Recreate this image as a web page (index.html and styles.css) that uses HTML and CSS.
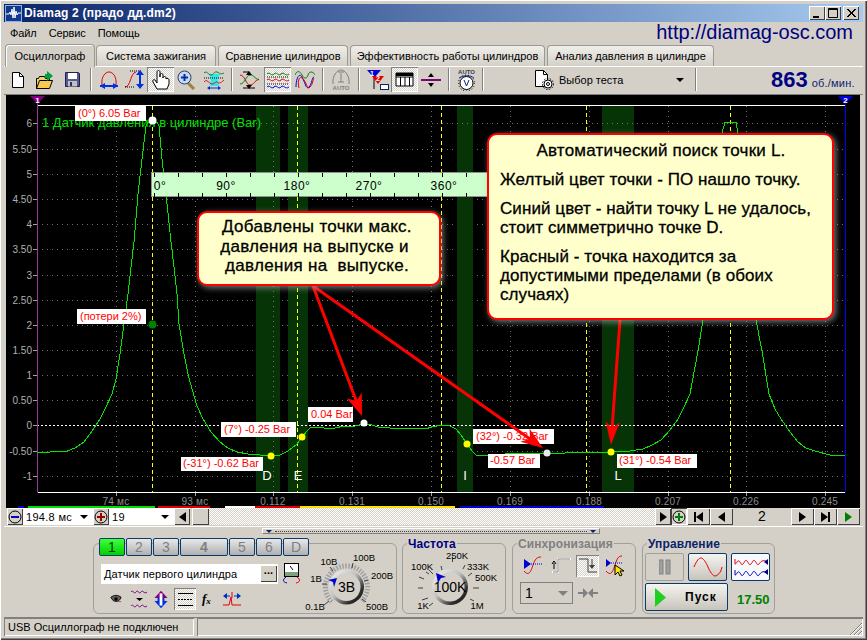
FILE: index.html
```html
<!DOCTYPE html>
<html lang="ru">
<head>
<meta charset="utf-8">
<title>Diamag 2</title>
<link rel="stylesheet" href="styles.css">
</head>
<body>
<svg class="defs" width="0" height="0"><defs>
<linearGradient id="kn" x1="0" y1="0" x2="1" y2="1"><stop offset="0" stop-color="#f8f8f8"/><stop offset=".45" stop-color="#c0c0c0"/><stop offset=".75" stop-color="#303030"/><stop offset="1" stop-color="#101010"/></linearGradient>
</defs></svg>
<div class="win">
  <header class="titlebar">
    <svg class="appicon" width="17" height="17" viewBox="0 0 17 17"><rect width="17" height="17" fill="#123a8c"/><rect x=".5" y=".5" width="16" height="16" fill="none" stroke="#8fb0e8"/><path d="M1 9h3l1-2 1 3 1-6 1 9 1-11 1 11 1-7 1 4 1-2h3" fill="none" stroke="#fff"/></svg>
    <span class="apptitle">Diamag 2 (прадо дд.dm2)</span>
    <div class="winbtns">
      <span class="wb"><svg width="14" height="12" viewBox="0 0 14 12"><rect x="3" y="9" width="6" height="2"/></svg></span>
      <span class="wb"><svg width="14" height="12" viewBox="0 0 14 12"><path d="M2.5 1.5h9v9h-9zM2 2.5h10" fill="none" stroke="#000"/></svg></span>
      <span class="wb wb-x"><svg width="14" height="12" viewBox="0 0 14 12"><path d="M3 2l8 8M4 2l8 8M11 2l-8 8M12 2l-8 8" stroke="#000"/></svg></span>
    </div>
  </header>
  <nav class="menubar">
    <span>Файл</span><span>Сервис</span><span>Помощь</span>
    <a class="url">http://diamag-osc.com</a>
  </nav>
  <div class="tabs">
    <div class="tab active">Осциллограф</div>
    <div class="tab">Система зажигания</div>
    <div class="tab">Сравнение цилиндров</div>
    <div class="tab">Эффективность работы цилиндров</div>
    <div class="tab">Анализ давления в цилиндре</div>
  </div>
  <div class="toolbar">
    <span class="tb w24"><svg width="14" height="16" viewBox="0 0 14 16"><path d="M1.500 .5h7l4 4v11h-11z" fill="#fff" stroke="#000"/><path d="M8.500 .5v4h4" fill="none" stroke="#000"/></svg></span>
    <span class="tb w29"><svg width="20" height="20" viewBox="0 0 20 20"><path d="M1.500 18.500v-10h2l1-2h5l1 2h4v2" fill="#f0d070" stroke="#000"/><path d="M1.500 18.500l3-8h13l-3 8z" fill="#f8c850" stroke="#000"/><path d="M12 1l6 5-6 5v-3h-2v-4h2z" fill="#00a040"/></svg></span>
    <span class="tb w26"><svg width="15" height="15" viewBox="0 0 15 15"><path d="M.5.500h13l1 1v13h-14z" fill="#555a90" stroke="#202050"/><rect x="3" y="1" width="9" height="6" fill="#fff"/><rect x="3" y="9" width="9" height="5.500" fill="#c0c0c0"/><rect x="5" y="10" width="2" height="4" fill="#303060"/></svg></span>
    <i class="sep"></i>
    <span class="tb w25"><svg width="20" height="18" viewBox="0 0 20 18"><path d="M3 14C2 6 6 1 10 1s8 5 7 13" fill="none" stroke="#e00000"/><path d="M1 15h18" stroke="#0030e0" stroke-width="2"/><path d="M1 15l5-3v6zM19 15l-5-3v6z" fill="#0030e0"/></svg></span>
    <span class="tb w26"><svg width="21" height="19" viewBox="0 0 21 19"><path d="M1 17c6 0 5-14 11-15" fill="none" stroke="#e00000"/><path d="M6 1h12M1 17h9" stroke="#000" stroke-dasharray="1 1"/><path d="M16 3v13" stroke="#0030e0" stroke-width="2"/><path d="M16 0l4 5h-8zM16 19l4-5h-8z" fill="#0030e0"/></svg></span>
    <span class="tb w27 pressed"><svg width="18" height="21" viewBox="0 0 18 21"><path d="M5 20l-4-7c-1-2 1-3 2-2l2 3V3c0-2 3-2 3 0v5V6c0-2 3-2 3 0v3c0-2 3-2 3 0v1c0-1 3-1 3 1v4l-2 5z" fill="#fff" stroke="#000"/></svg></span>
    <span class="tb w25"><svg width="19" height="20" viewBox="0 0 19 20"><path d="M11 13l6 6" stroke="#a08040" stroke-width="3"/><circle cx="7.500" cy="7.500" r="6.500" fill="#c8d8f8" stroke="#304060"/><path d="M4 7.500h7M7.500 4v7" stroke="#0030a0" stroke-width="2"/></svg></span>
    <span class="tb w29"><svg width="20" height="20" viewBox="0 0 20 20"><path d="M5 4h11l-2 5 1 7H6l1-7z" fill="#30e8e8"/><path d="M0 3c3-3 4 2 7 2s3-4 6-3 3 3 7 1" fill="none" stroke="#0a8040"/><path d="M0 8h20" stroke="#000" stroke-dasharray="1 1"/><path d="M0 12c3-4 5 2 8 2s4-3 5-2 3 2 7-2" fill="none" stroke="#d02020"/><path d="M4 18h12" stroke="#0030e0"/><path d="M3 18l3-2v4zM17 18l-3-2v4z" fill="#0030e0"/></svg></span>
    <i class="sep sep-s"></i>
    <span class="tb w25"><svg width="19" height="20" viewBox="0 0 19 20"><path d="M0 5c5 0 6 10 10 10s4-4 9-6" fill="none" stroke="#e00000"/><path d="M0 14c5 0 6-9 10-9s4 3 9 5" fill="none" stroke="#008000"/><path d="M3 2h6" stroke="#000"/><path d="M6 1l3 4h-6zM6 19l3-4h-6z" transform="translate(3 0)"/><path d="M3 18h12" stroke="#000"/></svg></span>
    <span class="tb w27 pressed waves"><svg width="22" height="19" viewBox="0 0 22 19"><path d="M0 4c3-3 4 3 7 0s4 3 7 0 4 3 8 0" fill="none" stroke="#008000"/><path d="M0 7h22M0 14h22" stroke="#000" stroke-dasharray="1 1"/><path d="M0 10c3-3 4 3 7 0s4 3 7 0 4 3 8 0" fill="none" stroke="#e00000"/><path d="M0 17c3-3 4 3 7 0s4 3 7 0 4 3 8 0" fill="none" stroke="#0000e0"/></svg></span>
    <span class="tb w28"><svg width="20" height="19" viewBox="0 0 20 19"><path d="M0 5c2-5 5-4 7 0s5 4 6 0 5-4 7 0" fill="none" stroke="#008000"/><path d="M1 17c0-8 3-15 6-10s4 13 7 10 3-10 5-10" fill="none" stroke="#0000e0"/><path d="M4 18c-2-8 1-14 5-8s3 10 6 7 3-8 4-9" fill="none" stroke="#e00000"/></svg></span>
    <i class="sep sep-s"></i>
    <span class="tb w26"><svg width="20" height="22" viewBox="0 0 20 22"><path d="M2 15C1 7 6 1 10 1s9 6 8 14" fill="#d4d0c8" stroke="#808080"/><path d="M10 4v9" stroke="#808080"/><path d="M7 3h6M7 13h6" stroke="#808080"/><text class="auto" x="10" y="21">AUTO</text></svg></span>
    <i class="sep sep-m"></i>
    <span class="tb w27"><svg width="24" height="22" viewBox="0 0 24 22"><path d="M1 1h14l-7 8z" fill="#0000d0"/><path d="M8 9v11" stroke="#000"/><path d="M6 7h12l-6 8z" fill="#e00000"/><text class="fl" x="6" y="7">1</text><text class="fl" x="12" y="12">2</text><rect x="14.500" y="15.500" width="8" height="5" fill="#fff" stroke="#0a246a"/></svg></span>
    <span class="tb w27 pressed"><svg width="19" height="15" viewBox="0 0 19 15"><path d="M1 1h17v13H1zM1 5h17M5.500 5v9M10 5v9M14.500 5v9" fill="#fff" stroke="#000"/><path d="M1 1h17v3H1z"/></svg></span>
    <span class="tb w26"><svg width="20" height="16" viewBox="0 0 20 16"><path d="M0 8h20" stroke="#800080" stroke-width="2"/><path d="M10 1l3 4H7zM10 15l3-4H7z"/></svg></span>
    <i class="sep sep-m"></i>
    <span class="tb w25"><svg width="19" height="22" viewBox="0 0 19 22"><text class="auto blk" x="9.500" y="5">AUTO</text><path d="M2 9c4-3 11-3 15 0" fill="none" stroke="#0030e0"/><circle cx="9.500" cy="14" r="6.500" fill="#fff" stroke="#000"/><circle cx="9.500" cy="14" r="8" fill="none" stroke="#000" stroke-dasharray="1 2"/><path d="M7 11l2.500 6 2.500-6" fill="none" stroke="#0a246a"/></svg></span>
    <i class="sep sep-s"></i>
    <div class="testsel">
      <svg width="21" height="22" viewBox="0 0 21 22"><path d="M1.500 1.500h8l4 4v12h-12z" fill="#fff" stroke="#000"/><path d="M9.500 1.500v4h4" fill="none" stroke="#000"/><circle cx="14" cy="15" r="4" fill="#fff" stroke="#000"/><circle cx="14" cy="15" r="5.500" fill="none" stroke="#000" stroke-dasharray="1.500 1.500"/><circle cx="14" cy="15" r="1.500" fill="none" stroke="#000"/></svg>
      <span class="testname">Выбор теста</span>
      <i class="caret"></i>
    </div>
    <i class="sep sep-n"></i>
    <div class="rpm"><b>863</b><span>об./мин.</span></div>
  </div>

  <main class="scope">
    <svg class="plot" width="854" height="413" viewBox="6 96 854 413">
      <g class="grid">
        <path d="M37 124.500H845M37 150.500H845M37 175.500H845M37 200.500H845M37 225.500H845M37 250.500H845M37 276.500H845M37 301.500H845M37 326.500H845M37 351.500H845M37 376.500H845M37 401.500H845M37 452.500H845M37 477.500H845"/>
        <path d="M116.500 107V493M195.500 107V493M273.500 107V493M352.500 107V493M431.500 107V493M510.500 107V493M589.500 107V493M668.500 107V493M746.500 107V493M825.500 107V493"/>
      </g>
      <g class="band">
        <rect x="256" y="107" width="24" height="386"/><rect x="288" y="107" width="20" height="386"/><rect x="457" y="107" width="16" height="386"/><rect x="602" y="107" width="32" height="386"/>
      </g>
      <path class="grid" d="M256 124.500H280M288 124.500H308M457 124.500H473M602 124.500H634M256 175.500H280M288 175.500H308M256 225.500H280M288 225.500H308M256 276.500H280M288 276.500H308M273.500 107V493"/>
      <path class="yline" d="M152.500 107V493M297.500 107V493M441.500 107V493M586.500 107V493M730.500 107V493"/>
      <path class="zero" d="M37 426.500H845"/>
      <path class="axis" d="M38 106.500H845M38 493.500H845"/>
      <path class="ch1" d="M37.500 100V493.500"/>
      <path class="ch2" d="M845.500 100V493.500"/>
      <path d="M30 97h15l-7.500 8z" fill="#800080"/><text class="mk" x="37.500" y="104">1</text>
      <path d="M838 97h15l-7.500 8z" fill="#0000e0"/><text class="mk" x="845.500" y="104">2</text>
      <path class="ticks" d="M33 124.500h4M33 150.500h4M33 175.500h4M33 200.500h4M33 225.500h4M33 250.500h4M33 276.500h4M33 301.500h4M33 326.500h4M33 351.500h4M33 376.500h4M33 401.500h4M33 426.500h4M33 452.500h4M33 477.500h4M116.500 494v3M195.500 494v3M273.500 494v3M352.500 494v3M431.500 494v3M510.500 494v3M589.500 494v3M668.500 494v3M746.500 494v3M825.500 494v3"/>
      <g class="ylab">
        <text x="32" y="128">6</text><text x="32" y="154">5.50</text><text x="32" y="179">5</text><text x="32" y="204">4.50</text><text x="32" y="229">4</text><text x="32" y="254">3.50</text><text x="32" y="280">3</text><text x="32" y="305">2.50</text><text x="32" y="330">2</text><text x="32" y="355">1.50</text><text x="32" y="380">1</text><text x="32" y="405">0.50</text><text x="32" y="430">0</text><text x="32" y="456">-0.50</text><text x="32" y="481">-1</text>
      </g>
      <g class="xlab">
        <text x="116" y="506">74 мс</text><text x="195" y="506">93 мс</text><text x="273" y="506">0.112</text><text x="352" y="506">0.131</text><text x="431" y="506">0.150</text><text x="510" y="506">0.169</text><text x="589" y="506">0.188</text><text x="668" y="506">0.207</text><text x="746" y="506">0.226</text><text x="825" y="506">0.245</text>
      </g>
      <text class="chname" x="42" y="128">1 Датчик давления в цилиндре (Bar)</text>
      <polyline class="curve" points="37,453 50,453 60,452 67,452 75,449 84,443 92,432 100,420 106,408 112,395 116,380 120,355 124,325 128,295 131,268 134,243 138,195 142,160 146,127 148,123 157,123 159,127 162,160 166,195 171,243 174,268 177,295 179,325 184,355 188,375 192,390 197,407 203,420 211,433 220,443 228,449 237,453 248,455 260,456 271,457 280,456 288,452 297,445 302,438 307,432 310,429 313,428 320,428 328,430 335,429 344,427 355,427 364,425 372,426 378,428 390,429 408,429 425,430 432,428 441,426 450,427 456,430 461,436 467,445 472,452 476,456 481,457 490,456 505,455 547,454 565,454 575,453 590,454 611,453 630,452 643,450 652,446 661,441 670,431 678,420 684,408 690,395 698,352 703,321 710,270 716,190 722,134 725,123 736,123 738,134 745,190 750,270 756,321 762,352 769,395 775,410 781,420 790,433 798,443 806,449 815,452 830,456 845,457"/>

      <g class="ruler">
        <rect class="rbar" x="151.500" y="173.500" width="336" height="24"/>
        <path class="rticks" d="M154.500 174v4M178.500 174v4M202.500 174v4M226.500 174v4M250.500 174v4M274.500 174v4M298.500 174v4M322.500 174v4M346.500 174v4M370.500 174v4M394.500 174v4M418.500 174v4M442.500 174v4M466.500 174v4M154.500 194v4M178.500 194v4M202.500 194v4M226.500 194v4M250.500 194v4M274.500 194v4M298.500 194v4M322.500 194v4M346.500 194v4M370.500 194v4M394.500 194v4M418.500 194v4M442.500 194v4M466.500 194v4"/>
        <text x="160" y="191">0°</text><text x="226" y="191">90°</text><text x="297" y="191">180°</text><text x="369" y="191">270°</text><text x="444" y="191">360°</text>
      </g>

      <g class="tags">
        <rect x="75" y="107" width="71" height="15"/><text x="78" y="118">(0°) 6.05 Bar</text>
        <rect x="77" y="310" width="69" height="15"/><text x="80" y="321">(потери 2%)</text>
        <rect x="221" y="423" width="75" height="15"/><text x="224" y="434">(7°) -0.25 Bar</text>
        <rect x="181" y="458" width="82" height="14"/><text x="183" y="468">(-31°) -0.62 Bar</text>
        <rect x="308" y="408" width="45" height="15"/><text x="311" y="419">0.04 Bar</text>
        <rect x="473" y="430" width="81" height="15"/><text x="476" y="441">(32°) -0.32 Bar</text>
        <rect x="488" y="455" width="52" height="14"/><text x="490" y="465">-0.57 Bar</text>
        <rect x="617" y="455" width="80" height="14"/><text x="619" y="465">(31°) -0.54 Bar</text>
      </g>
      <g class="lett"><text x="267" y="481">D</text><text x="298" y="481">E</text><text x="465" y="481">I</text><text x="618" y="481">L</text></g>
      <g class="pts">
        <circle cx="152.500" cy="121.500" r="4" fill="#fff"/><circle cx="152.500" cy="325.500" r="4" fill="#008000"/><circle cx="271" cy="457" r="3.500" fill="#ff0"/><circle cx="302" cy="438" r="3.500" fill="#ff0"/><circle cx="467" cy="445" r="3.500" fill="#ff0"/><circle cx="611" cy="453" r="3.500" fill="#ff0"/><circle cx="364" cy="424" r="3.500" fill="#fff"/><circle cx="547" cy="454" r="3.500" fill="#e8e8e8"/>
      </g>
      <g class="arrows">
        <path class="shaft" d="M313 287L357 404M313 287L530 440M620 321L612 430"/>
        <path d="M362 417L361.700 393.600 356.400 402 346.700 399.200zM543 449L529.600 429.800 529.900 439.800 520.400 442.800zM611 446L605.600 422.500 612.200 429 619.600 423.500z"/>
      </g>
      <g class="strip">
        <rect x="18" y="507" width="6" height="2" fill="#0000e0"/><rect x="28" y="507" width="127" height="2" fill="#00e000"/><rect x="158" y="507" width="52" height="2" fill="#e00000"/><rect x="225" y="507" width="30" height="2" fill="#fff"/><rect x="255" y="507" width="45" height="2" fill="#e00000"/><rect x="300" y="507" width="155" height="2" fill="#ffe000"/><rect x="460" y="507" width="144" height="2" fill="#0000e0"/>
      </g>
    </svg>
    <div class="note note-a">
      <p>Добавлены точки макс.</p>
      <p>давления на выпуске и&nbsp;</p>
      <p>давления на&nbsp; выпуске.</p>
    </div>
    <div class="note note-b">
      <h3>Автоматический поиск точки L.</h3>
      <p>Желтый цвет точки - ПО нашло точку.</p>
      <p>Синий цвет - найти точку L не удалось, стоит симметрично точке D.</p>
      <p>Красный - точка находится за допустимыми пределами (в обоих случаях)</p>
    </div>
  </main>

  <div class="navrow">
    <span class="nb w16"><svg width="14" height="14" viewBox="0 0 14 14"><circle cx="7" cy="7" r="6" fill="#d4d0c8" stroke="#000"/><path d="M3 7h8" stroke="#0000c0" stroke-width="2"/></svg></span>
    <div class="combo cb-a"><span>194.8 мс</span><i class="caret"></i></div>
    <span class="nb w16"><svg width="14" height="14" viewBox="0 0 14 14"><circle cx="7" cy="7" r="6" fill="#d4d0c8" stroke="#000"/><path d="M3 7h8M7 3v8" stroke="#a00000" stroke-width="2"/></svg></span>
    <div class="combo cb-b"><span>19</span><i class="caret"></i></div>
    <span class="nb w16"><i class="tri-l"></i></span>
    <span class="nb w17 thumb"></span>
    <div class="track"></div>
    <span class="nb w16"><i class="tri-r"></i></span>
    <span class="nb w16 sel"><svg width="14" height="14" viewBox="0 0 14 14"><circle cx="7" cy="7" r="6" fill="#d4d0c8" stroke="#000"/><path d="M3 7h8M7 3v8" stroke="#008000" stroke-width="2"/></svg></span>
    <span class="nb w23"><i class="bar"></i><i class="tri-l"></i></span>
    <span class="nb w23"><i class="tri-l"></i></span>
    <div class="pageno">2</div>
    <span class="nb w23"><i class="tri-r"></i></span>
    <span class="nb w23"><i class="tri-r"></i><i class="bar"></i></span>
    <span class="nb w23"><i class="tri-r grn"></i></span>
  </div>

  <section class="panel">
    <div class="splitter"><i class="sp-a"></i><i class="sp-dots"></i><i class="sp-a"></i></div>
    <div class="groups">
      <div class="grp g-ch">
        <div class="chrow">
          <span class="ch on">1</span><span class="ch">2</span><span class="ch">3</span><span class="ch ch4">4</span><span class="ch">5</span><span class="ch">6</span><span class="ch">D</span>
        </div>
        <div class="chbody">
          <div class="chleft">
            <div class="sensor">
              <div class="field"><span>Датчик первого цилиндра</span><span class="dots">...</span></div>
              <svg width="19" height="21" viewBox="0 0 19 21"><rect x="2.500" y=".5" width="14" height="13" fill="#fff" stroke="#000"/><path d="M3 9h13v4H3z" fill="#80a080"/><path d="M8 3l3 4" stroke="#000"/><path d="M4 14c-4 3-3 5 1 6" fill="none" stroke="#0000c0"/><path d="M15 14c4 3 3 5-1 6" fill="none" stroke="#e00000"/></svg>
            </div>
            <div class="chicons">
              <svg class="m3" width="12" height="10" viewBox="0 0 14 10"><path d="M1 3c4-3 8-3 12 0-2 6-9 7-12 0z" fill="#606060" stroke="#000"/><circle cx="7" cy="5" r="2" fill="#000"/><path d="M9 8h4" stroke="#c04040"/></svg>
              <svg width="17" height="20" viewBox="0 0 17 20"><path d="M0 3c2-3 3 3 5 0s3 3 5 0 3 3 6 0" fill="none" stroke="#800080"/><path d="M5 9h7l-3.500 3z"/><path d="M0 17c2-3 3 3 5 0s3 3 5 0 3 3 6 0" fill="none" stroke="#800080"/></svg>
              <svg width="14" height="19" viewBox="0 0 15 19"><path d="M7.500 0l7 8H11v3H4V8H.5z" fill="#800080"/><path d="M7.500 19l7-8H11V8H4v3H.5z" fill="#0030e0"/><rect x="6" y="3" width="3" height="13" fill="#fff"/></svg>
              <span class="pressed lines"><svg width="19" height="17" viewBox="0 0 19 17"><path d="M2 2.500h15M2 14.500h15" stroke="#000"/><path d="M2 8.500h15" stroke="#000" stroke-dasharray="2 1"/></svg></span>
              <span class="fx m3">f<sub>x</sub></span>
              <svg width="18" height="16" viewBox="0 0 18 16"><path d="M0 14h6l2-8 1 8h9" fill="none" stroke="#e00000"/><path d="M9 1v6" stroke="#e00000"/><path d="M1 5h6M11 5h6" stroke="#0030c0"/><path d="M0 5l4-3v6zM18 5l-4-3v6z" fill="#0030c0"/></svg>
            </div>
          </div>
          <svg class="knob kv" width="92" height="69" viewBox="305 546 92 69">
            <path class="hatch" d="M331.700 602.800A21 21 0 1 1 361.300 602.800"/>
            <path class="scale" d="M329 602l-5 4M327 585l-5 0M333 572l-3-4M352 569l1-5M364 582l4-1M362 600l4 3"/>
            <circle class="dial" cx="346.500" cy="588" r="17.500"/><circle class="face" cx="346.500" cy="588" r="14"/>
            <path d="M328 581l9-2-3 9-1-5z" fill="#0000d0"/>
            <text class="kval" x="346.500" y="593">3В</text>
            <g class="ktx"><text x="329" y="566">10В</text><text x="364" y="562">100В</text><text x="316" y="583">1В</text><text x="382" y="580">200В</text><text x="315" y="611">0.1В</text><text x="377" y="611">500В</text></g>
          </svg>
        </div>
      </div>
      <div class="grp g-fr">
        <span class="lg">Частота</span>
        <svg class="knob kf" width="102" height="69" viewBox="402 546 102 69">
          <path class="scale" d="M433 575l-4-4M442 571l-1-4M452.500 563v-5M463 570l2-4M468 577l4-3M473 589h6M470 600l4 2M433 604l-4 3M428 599l-6 2M423 589h-5M424 580l-5-2M429 575l-3-2"/>
          <circle class="dial" cx="450" cy="588" r="18"/><circle class="face" cx="450" cy="588" r="14.500"/>
          <path d="M436 574l2 10 3-5 5-1z" fill="#0000d0"/>
          <text class="kval" x="450" y="593">100K</text>
          <g class="ktx"><text x="457" y="560">250K</text><text x="422" y="571">100K</text><text x="478" y="571">333K</text><text x="486" y="582">500K</text><text x="423" y="610">1K</text><text x="477" y="610">1M</text></g>
        </svg>
      </div>
      <div class="grp g-sy">
        <span class="lg off">Синхронизация</span>
        <div class="syrow">
          <svg width="22" height="19" viewBox="0 0 22 19"><path d="M1 15c5 6 7 0 9-6s4-8 8-8" fill="none" stroke="#e00000"/><path d="M6 8h13" stroke="#0000d0" stroke-dasharray="1 1"/><path d="M1 3l7 5-7 5z" fill="#0000d0"/></svg>
          <svg width="21" height="19" viewBox="0 0 21 19"><path d="M1 16h6V3h13" fill="none" stroke="#fff" stroke-width="2"/><path d="M2 16h5V3h12" fill="none" stroke="#808080"/><path d="M3 13V7M1 8l2-3 2 3" fill="none" stroke="#000"/></svg>
          <span class="pressed sytg"><svg width="20" height="19" viewBox="0 0 20 19"><path d="M1 3h9v13h9" fill="none" stroke="#404040"/><path d="M14 3v9" stroke="#404040"/><path d="M11 9h6l-3 4z" fill="#404040"/></svg></span>
          <svg width="19" height="23" viewBox="0 0 19 23"><path d="M1 17c5 6 7 0 9-6s3-9 7-9" fill="none" stroke="#e00000"/><path d="M6 9h12" stroke="#0000d0" stroke-dasharray="1 1"/><path d="M1 5l5 4-5 4z" fill="#0000d0"/><path d="M10 11v10l3-3 2 4 2-1-2-4h4z" fill="#ffe800" stroke="#000"/></svg>
        </div>
        <div class="syrow2">
          <div class="sycombo"><span>1</span><i class="caret gray"></i></div>
          <svg width="20" height="10" viewBox="0 0 20 10"><path d="M0 4h5V0l5 5-5 5V6H0zM20 4h-5V0l-5 5 5 5V6h5z" fill="#808080"/></svg>
        </div>
      </div>
      <div class="grp g-ct">
        <span class="lg nv">Управление</span>
        <div class="ctrow">
          <span class="cb cb-off"><svg width="12" height="16" viewBox="0 0 12 16"><rect x="0" y="1" width="4" height="14" fill="#a0a0a0" stroke="#808080"/><rect x="7" y="1" width="4" height="14" fill="#a0a0a0" stroke="#808080"/></svg></span>
          <span class="cb"><svg width="30" height="20" viewBox="0 0 30 20"><path d="M1 10C4 3 6 1 8 1s5 4 7 9 5 9 7 9 6-3 7-9" fill="none" stroke="#e00000"/></svg></span>
          <span class="cb cb-w"><svg width="34" height="20" viewBox="0 0 34 20"><path d="M1 2v5c2 0 2-4 4-3s2 5 4 3 2-5 4-3 2 5 4 3 2-5 4-3 2 5 4 3 2-4 7-3" fill="none" stroke="#e00000"/><path d="M1 13v5c2 0 2-4 4-3s2 5 4 3 2-5 4-3 2 5 4 3 2-5 4-3 2 5 4 3 2-4 7-3" fill="none" stroke="#0000c0"/><path d="M34 2l-4 3 4 3zM34 12l-4 3 4 3z" fill="#000080"/></svg></span>
        </div>
        <div class="ctrow2">
          <span class="cb cb-go"><svg width="11" height="19" viewBox="0 0 11 24" preserveAspectRatio="none"><path d="M0 0l11 12L0 24z" fill="#20d020"/></svg><b>Пуск</b></span>
          <strong class="timer">17.50</strong>
        </div>
      </div>
    </div>
  </section>

  <footer class="status">
    <span class="cell c1">USB Осциллограф не подключен</span>
    <span class="cell c2"></span>
    <svg class="grip" width="12" height="12" viewBox="0 0 12 12"><path d="M0 12L12 0M4 12l8-8M8 12l4-4" stroke="#808080"/><path d="M1 12L12 1M5 12l7-7M9 12l3-3" stroke="#fff"/></svg>
  </footer>
</div>
</body>
</html>
```
FILE: styles.css
```css
* { box-sizing: border-box; }
html, body { margin: 0; padding: 0; }
body { width: 867px; height: 640px; overflow: hidden; background: #d4d0c8; font: 11px "Liberation Sans", Arial, sans-serif; color: #000; }
.defs { position: absolute; }
.win { width: 867px; height: 640px; padding: 4px 4px 0; display: flex; flex-direction: column; box-shadow: inset 1px 1px 0 #fff, inset -1px -1px 0 #404040, inset -2px -2px 0 #808080; }

.titlebar { height: 18px; flex: none; display: flex; align-items: center; padding-left: 1px; background: linear-gradient(90deg, #0a246a, #a6caf0); }
.apptitle { margin-left: 2px; color: #fff; font: bold 12px "Liberation Sans", sans-serif; letter-spacing: .2px; white-space: nowrap; }
.winbtns { margin-left: auto; margin-right: 4px; display: flex; }
.wb { width: 16px; height: 14px; background: #d4d0c8; box-shadow: inset 1px 1px 0 #fff, inset -1px -1px 0 #404040; display: flex; align-items: center; justify-content: center; }
.wb-x { margin-left: 2px; }

.menubar { height: 21px; flex: none; display: flex; align-items: center; padding-left: 6px; gap: 12px; font-size: 11px; letter-spacing: -.1px; white-space: nowrap; }
.url { margin-left: auto; margin-right: 10px; font-size: 20px; letter-spacing: 0; color: #000080; }

.tabs { height: 23px; flex: none; display: grid; grid-template-columns: 89px 120px 130px 195px 167px; column-gap: 2px; align-items: end; padding-left: 1px; font-size: 11px; white-space: nowrap; }
.tab { height: 21px; display: flex; align-items: center; justify-content: center; background: linear-gradient(#f0eeea, #d4d0c8); border: 1px solid #9a9a94; border-bottom: 0; border-radius: 4px 4px 0 0; }
.tab.active { height: 23px; background: #d4d0c8; box-shadow: inset 1px 1px 0 #fff; position: relative; margin: 0 -1px -1px 0; }

.toolbar { height: 29px; flex: none; display: flex; align-items: center; padding: 0 0 2px 2px; border-top: 1px solid #fff; border-bottom: 1px solid #808080; }
.tb { height: 25px; display: flex; align-items: center; justify-content: center; flex: none; }
.w24 { width: 24px; } .w25 { width: 25px; } .w26 { width: 26px; } .w27 { width: 27px; } .w28 { width: 28px; } .w29 { width: 29px; }
.sep { flex: none; width: 2px; height: 23px; margin: 0 4px 0 5px; background: linear-gradient(90deg, #808080 50%, #fff 50%); }
.sep-s { margin: 0 4px 0 3px; }
.sep-m { margin: 0 4px 0 4px; }
.sep-n { margin: 0 0 0 5px; }
.pressed { background: repeating-conic-gradient(#fff 0 25%, #d4d0c8 0 50%) 0 0 / 2px 2px; box-shadow: inset 1px 1px 0 #808080, inset -1px -1px 0 #fff; display: flex; align-items: center; justify-content: center; }
.waves { margin-left: 2px; }
.auto { font: bold 6px "Liberation Sans", sans-serif; fill: #808080; text-anchor: middle; }
.auto.blk { fill: #404040; }
.fl { font: bold 7px "Liberation Sans", sans-serif; fill: #fff; text-anchor: middle; }
.testsel { flex: none; width: 202px; display: flex; align-items: center; padding-left: 46px; font-size: 11px; white-space: nowrap; }
.testname { margin-left: 4px; }
.testsel .caret { margin-left: auto; margin-right: 6px; }
.caret { display: inline-block; width: 0; height: 0; border: 4px solid transparent; border-top: 4px solid #000; border-bottom: 0; }
.caret.gray { border-top-color: #808080; border-width: 5px 5px 0; }
.rpm { margin-left: 74px; display: flex; align-items: baseline; gap: 4px; color: #000080; white-space: nowrap; }
.rpm b { font-size: 22px; }
.rpm span { font-size: 11px; letter-spacing: .2px; color: #0a246a; }

.scope { position: relative; flex: none; height: 413px; margin: 0 0 0 2px; width: 854px; background: #000; }
.plot { display: block; }
.grid { fill: none; stroke: #707070; stroke-dasharray: 1 4; }
.band rect { fill: #063406; }
.yline { stroke: #ffff00; stroke-dasharray: 4 3; fill: none; }
.zero { stroke: #fff; stroke-dasharray: 2 2; fill: none; }
.axis { stroke: #fff; fill: none; }
.ch1 { stroke: #9a3a9a; } .ch2 { stroke: #0000ff; }
.mk { font: bold 8px "Liberation Sans", sans-serif; fill: #fff; text-anchor: middle; }
.ticks { stroke: #a0a0a0; fill: none; }
.ylab text { font: 10px "Liberation Sans", sans-serif; fill: #b0b0b0; text-anchor: end; }
.xlab text { font: 10px "Liberation Sans", sans-serif; fill: #8c8c8c; text-anchor: middle; letter-spacing: .2px; }
.chname { font: 13px "Liberation Sans", sans-serif; fill: #00e000; }
.curve { fill: none; stroke: #00e800; shape-rendering: crispEdges; }
.rbar { fill: #ccffcc; stroke: #909090; }
.rticks { stroke: #000; fill: none; shape-rendering: crispEdges; }
.ruler text { font: 12px "Liberation Sans", sans-serif; fill: #000; text-anchor: middle; letter-spacing: .5px; }
.tags rect { fill: #fff; }
.tags text { font: 11px "Liberation Sans", sans-serif; fill: #ff0000; }
.lett text { font: 13px "Liberation Sans", sans-serif; fill: #fff; text-anchor: middle; }
.shaft { stroke: #ff0000; stroke-width: 3; fill: none; }
.arrows path:not(.shaft) { fill: #ff0000; }

.note { position: absolute; background: #ffffcc; border: 2px solid #ff0000; border-radius: 10px; box-shadow: 2px 2px 6px rgba(170, 170, 170, .7); font-size: 17px; color: #000; -webkit-text-stroke: .3px #000; }
.note p, .note h3 { margin: 0; font-weight: 400; font-size: inherit; }
.note-a { left: 191px; top: 116px; width: 244px; height: 75px; padding: 4px 4px 0 0; text-align: center; line-height: 19.5px; white-space: nowrap; letter-spacing: .3px; }
.note-b { left: 481px; top: 38px; width: 347px; height: 187px; padding: 5.5px 10px 0 11px; line-height: 19px; letter-spacing: .08px; }
.note-b h3 { text-align: center; margin-bottom: 10px; letter-spacing: .2px; }
.note-b p { margin-bottom: 10px; }

.navrow { height: 18px; flex: none; display: flex; margin: 0 0 0 3px; width: 853px; }
.nb { flex: none; height: 17px; display: flex; align-items: center; justify-content: center; background: #d4d0c8; box-shadow: inset 1px 1px 0 #fff, inset -1px -1px 0 #404040; }
.w16 { width: 16px; } .w17 { width: 17px; } .w23 { width: 23px; }
.nb.sel { box-shadow: inset 1px 1px 0 #404040, inset -1px -1px 0 #fff; }
.thumb { margin-left: 2px; }
.combo { flex: none; height: 17px; display: flex; align-items: center; justify-content: space-between; background: #fff; padding: 0 5px 0 3px; font-size: 11px; letter-spacing: .3px; }
.cb-a { width: 70px; } .cb-b { width: 65px; }
.track { flex: 1; height: 17px; background: repeating-conic-gradient(#fff 0 25%, #d4d0c8 0 50%) 0 0 / 2px 2px; }
.tri-l { width: 0; height: 0; border: 5px solid transparent; border-right: 7px solid #000; border-left: 0; }
.tri-r { width: 0; height: 0; border: 5px solid transparent; border-left: 7px solid #000; border-right: 0; }
.tri-r.grn { border-left-color: #008000; }
.bar { width: 2px; height: 10px; background: #000; }
.pageno { flex: none; width: 58px; text-align: center; font-size: 14px; line-height: 17px; }

.panel { flex: none; height: 92px; border-top: 1px solid #fff; position: relative; display: flex; flex-direction: column; border-bottom: 1px solid #808080; }
.splitter { position: absolute; left: 258px; top: 1px; width: 338px; height: 6px; display: flex; align-items: center; gap: 3px; padding: 0 3px; border: 1px solid #a0a0a0; border-color: #fff #808080 #808080 #fff; }
.sp-a { width: 0; height: 0; border: 3px solid transparent; border-top: 3px solid #0a246a; border-bottom: 0; flex: none; }
.sp-dots { flex: 1; border-top: 1px dotted #404040; }
.groups { display: flex; padding: 16px 0 0 89px; gap: 5px; align-items: flex-start; }
.grp { flex: none; height: 71px; border: 1px solid #a0a09a; border-radius: 6px; position: relative; }
.lg { position: absolute; left: 4px; top: -5px; padding: 0 1px; background: #d4d0c8; font: bold 12px "Liberation Sans", sans-serif; letter-spacing: .1px; color: #000080; line-height: 11px; height: 11px; white-space: nowrap; }
.lg.off { color: #808080; }
.lg.nv { color: #0a246a; }
.g-ch { width: 304px; }
.g-fr { width: 104px; }
.g-sy { width: 124px; margin-left: 1px; }
.g-ct { width: 133px; margin-left: 1px; }
.chrow { display: flex; gap: 1px; padding-left: 5px; margin-top: -6px; }
.ch { flex: none; width: 26px; height: 18px; border: 1px solid #0a3a6a; border-radius: 2px; background: linear-gradient(#e8e8e8, #b0b0b0); color: #808080; text-align: center; font-size: 14px; line-height: 16px; }
.ch.on { background: linear-gradient(#40ff40, #00d000); color: #004000; }
.ch4 { width: 48px; font-weight: bold; }
.chbody { display: flex; align-items: flex-start; }
.chleft { width: 207px; padding: 7px 0 0 7px; flex: none; }
.sensor { display: flex; align-items: center; gap: 4px; }
.field { width: 177px; height: 20px; flex: none; background: #fff; display: flex; align-items: center; justify-content: space-between; padding: 0 1px 0 3px; font-size: 11px; letter-spacing: .1px; white-space: nowrap; }
.dots { width: 17px; height: 17px; background: #d4d0c8; box-shadow: inset 1px 1px 0 #fff, inset -1px -1px 0 #404040; text-align: center; font-weight: bold; line-height: 11px; }
.chicons { display: flex; align-items: center; margin-top: 4px; padding-left: 9px; gap: 6px; height: 22px; }
.m3 { margin-right: 3px; }
.lines { width: 22px; height: 22px; }
.fx { width: 12px; font: italic bold 13px "Liberation Serif", serif; }
.fx sub { font-size: 9px; vertical-align: -1px; line-height: 0; }
.knob { display: block; flex: none; }
.kv { margin: -11px 0 0 4px; }
.kf { margin: 1px 0 0 -1px; }
.dial { fill: url(#kn); }
.face { fill: #d4d0c8; }
.scale { stroke: #404040; fill: none; stroke-width: 1; }
.hatch { fill: none; stroke: #a0a0a0; stroke-width: 5; stroke-dasharray: 1.500 1.500; }
.kval { font: 14px "Liberation Sans", sans-serif; text-anchor: middle; }
.ktx text { font: 9.5px "Liberation Sans", sans-serif; text-anchor: middle; fill: #000; }
.syrow { display: flex; align-items: center; padding-left: 10px; gap: 6px; margin-top: 10px; height: 23px; }
.sytg { width: 23px; height: 22px; margin-left: -2px; }
.syrow2 { display: flex; align-items: center; gap: 5px; padding-left: 7px; margin-top: 5px; }
.sycombo { width: 53px; height: 22px; border: 1px solid #808080; display: flex; align-items: center; justify-content: space-between; padding: 0 4px; font-size: 14px; }
.ctrow { display: flex; gap: 4px; padding-left: 2px; margin-top: 9px; }
.cb { flex: none; width: 39px; height: 28px; display: flex; align-items: center; justify-content: center; border: 1px solid #0a3a6a; border-radius: 2px; background: linear-gradient(#f4f4f0, #c8c4bc); }
.cb-off { border-color: #a0a09a; background: #d4d0c8; }
.cb-w { background: #f8f8ff; }
.ctrow2 { display: flex; align-items: center; padding-left: 2px; margin-top: 2px; }
.cb-go { width: 83px; justify-content: flex-start; padding-left: 9px; }
.cb-go b { margin-left: 19px; font-size: 12px; letter-spacing: 1px; }
.timer { margin-left: 9px; color: #008000; font-size: 13px; margin-top: 5px; }

.status { flex: none; height: 18px; display: flex; gap: 3px; align-items: stretch; position: relative; }
.cell { box-shadow: inset 1px 1px 0 #808080, inset -1px -1px 0 #fff; display: flex; align-items: center; padding-left: 4px; font-size: 11px; white-space: nowrap; }
.c1 { width: 190px; }
.c2 { flex: 1; }
.grip { position: absolute; right: 1px; bottom: 1px; }
```
